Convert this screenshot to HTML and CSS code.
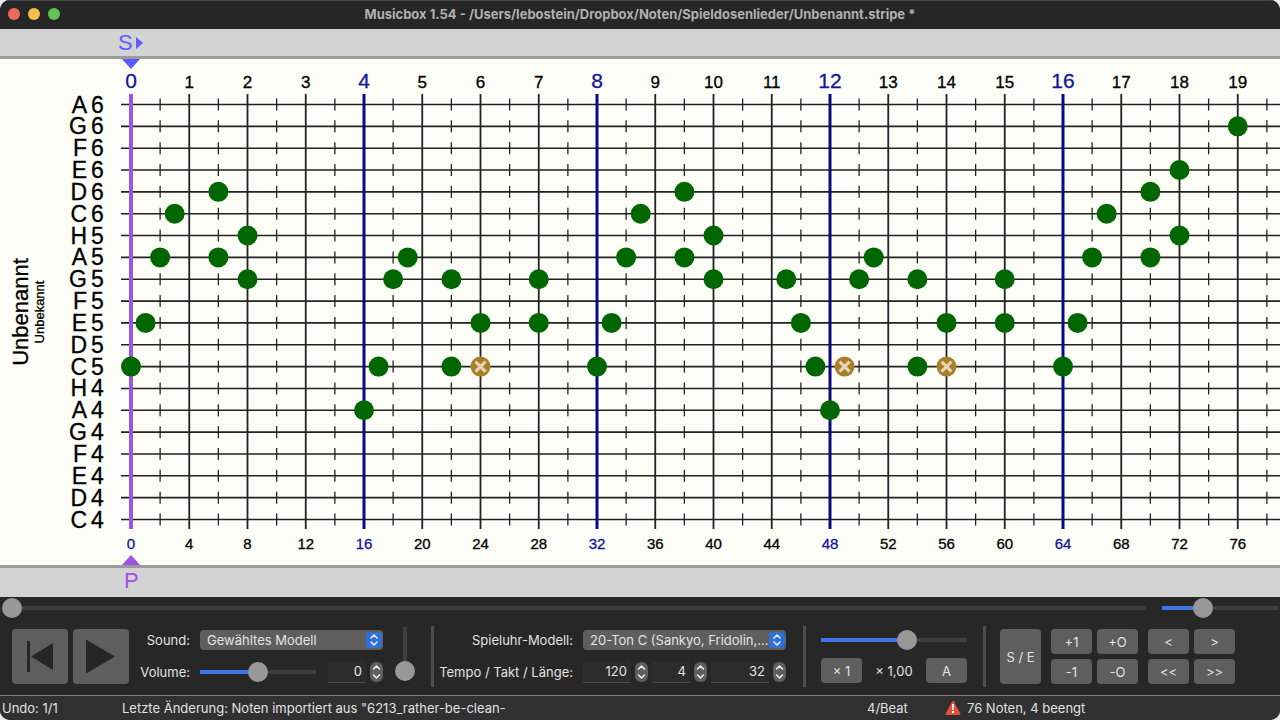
FILE: index.html
```html
<!DOCTYPE html>
<html lang="de">
<head>
    <meta charset="UTF-8">
    <meta name="viewport" content="width=device-width, initial-scale=1.0">
    <title>Musicbox 1.54</title>
    <link rel="stylesheet" href="styles.css">
</head>
<body>
    <div class="window">
        <header class="titlebar">
            <div class="lights">
                <span class="light close"></span>
                <span class="light minimize"></span>
                <span class="light maximize"></span>
            </div>
            <h1>Musicbox 1.54 - /Users/lebostein/Dropbox/Noten/Spieldosenlieder/Unbenannt.stripe *</h1>
        </header>

        <div class="band band-top">
            <span>S</span>
            <svg width="8" height="14" viewBox="0 0 8 14"><path d="M0 1v12l7-6z" fill="#5b5bff"/></svg>
        </div>
        <main class="sheet">
            <svg id="score" height="506"></svg>
        </main>
        <div class="band band-bottom"><span>P</span></div>

        <section class="panel">
            <div class="scrollers">
                <input type="range" class="position" aria-label="Position" value="0">
                <input type="range" class="zoom" aria-label="Zoom" value="32">
            </div>

            <div class="controls">
                <div class="transport">
                    <button class="big" aria-label="Zum Anfang">
                        <svg width="56" height="55" viewBox="0 0 56 55"><path d="M15 12h3v31h-3zM19 27.500L41 14v27z" fill="#262626"/></svg>
                    </button>
                    <button class="big" aria-label="Abspielen">
                        <svg width="56" height="55" viewBox="0 0 56 55"><path d="M13 10.500v34L42 27.500z" fill="#262626"/></svg>
                    </button>
                </div>

                <div class="fields sound">
                    <label for="sound">Sound:</label>
                    <div class="select">
                        <select id="sound"><option>Gewähltes Modell</option></select>
                        <svg width="16" height="16" viewBox="0 0 16 16"><path d="M5 6l3-3 3 3M5 10l3 3 3-3"/></svg>
                    </div>
                    <label for="volume">Volume:</label>
                    <div class="row">
                        <input type="range" id="volume" class="volume" value="50">
                        <input type="text" class="number small" aria-label="Transponieren" value="0">
                        <span class="stepper">
                            <button aria-label="Mehr"><svg width="13" height="10" viewBox="0 0 13 10"><path d="M3.500 7l3-3 3 3"/></svg></button>
                            <button aria-label="Weniger"><svg width="13" height="10" viewBox="0 0 13 10"><path d="M3.500 3l3 3 3-3"/></svg></button>
                        </span>
                    </div>
                </div>
                <input type="range" class="vertical" aria-label="Hall" value="0">

                <div class="divider"></div>

                <div class="fields model">
                    <label for="model">Spieluhr-Modell:</label>
                    <div class="select">
                        <select id="model"><option>20-Ton C (Sankyo, Fridolin,...</option></select>
                        <svg width="16" height="16" viewBox="0 0 16 16"><path d="M5 6l3-3 3 3M5 10l3 3 3-3"/></svg>
                    </div>
                    <label for="tempo">Tempo / Takt / Länge:</label>
                    <div class="row">
                        <input type="text" id="tempo" class="number medium" value="120">
                        <span class="stepper">
                            <button aria-label="Mehr"><svg width="13" height="10" viewBox="0 0 13 10"><path d="M3.500 7l3-3 3 3"/></svg></button>
                            <button aria-label="Weniger"><svg width="13" height="10" viewBox="0 0 13 10"><path d="M3.500 3l3 3 3-3"/></svg></button>
                        </span>
                        <input type="text" class="number small" aria-label="Takt" value="4">
                        <span class="stepper">
                            <button aria-label="Mehr"><svg width="13" height="10" viewBox="0 0 13 10"><path d="M3.500 7l3-3 3 3"/></svg></button>
                            <button aria-label="Weniger"><svg width="13" height="10" viewBox="0 0 13 10"><path d="M3.500 3l3 3 3-3"/></svg></button>
                        </span>
                        <input type="text" class="number large" aria-label="Länge" value="32">
                        <span class="stepper">
                            <button aria-label="Mehr"><svg width="13" height="10" viewBox="0 0 13 10"><path d="M3.500 7l3-3 3 3"/></svg></button>
                            <button aria-label="Weniger"><svg width="13" height="10" viewBox="0 0 13 10"><path d="M3.500 3l3 3 3-3"/></svg></button>
                        </span>
                    </div>
                </div>

                <div class="divider"></div>

                <div class="speed">
                    <input type="range" aria-label="Geschwindigkeit" value="60">
                    <div class="speed-row">
                        <button>× 1</button>
                        <output>× 1,00</output>
                        <button>A</button>
                    </div>
                </div>

                <div class="divider"></div>

                <button class="start-end">S / E</button>
                <div class="pad">
                    <button>+1</button>
                    <button>+O</button>
                    <button>-1</button>
                    <button>-O</button>
                </div>
                <div class="pad">
                    <button>&lt;</button>
                    <button>&gt;</button>
                    <button>&lt;&lt;</button>
                    <button>&gt;&gt;</button>
                </div>
            </div>
        </section>

        <footer class="status">
            <span class="undo">Undo: 1/1</span>
            <span class="change">Letzte Änderung: Noten importiert aus "6213_rather-be-clean-</span>
            <span class="beat">4/Beat</span>
            <span class="count">
                <svg width="16" height="16" viewBox="0 0 16 16"><path d="M8 2L14.500 14H1.500z" fill="#e0503f" stroke="#e0503f" stroke-width="2" stroke-linejoin="round"/><path d="M7 4h2l-.3 6H7.300zM7 11h2v2H7z" fill="#fff"/></svg>
                76 Noten, 4 beengt
            </span>
        </footer>
    </div>
    <script src="script.js"></script>
</body>
</html>
```
FILE: styles.css
```css
* {
    box-sizing: border-box;
}
body {
    margin: 0;
    background: #e8e8e8;
    color: #e2e2e2;
    font-family: Inter, "Liberation Sans", sans-serif;
    font-size: 13px;
    line-height: 20px;
}
.window {
    display: flex;
    flex-direction: column;
    min-height: 100vh;
    border-radius: 10px;
    overflow: hidden;
    background: #272727;
}
button, input, select {
    margin: 0;
    font: inherit;
    color: inherit;
}

/* title bar */
.titlebar {
    display: grid;
    grid-template-columns: 70px 1fr 70px;
    align-items: center;
    height: 29px;
    padding-bottom: 2px;
    background: #262626;
    border-top: 1px solid #4a4a4a;
}
.lights {
    display: flex;
    gap: 8px;
    padding-left: 8px;
}
.light {
    width: 12px;
    height: 12px;
    border-radius: 50%;
}
.close {
    background: #ed6a5e;
}
.minimize {
    background: #f5bf4f;
}
.maximize {
    background: #61c554;
}
h1 {
    margin: 0;
    font-size: 13px;
    font-weight: 700;
    text-align: center;
    white-space: nowrap;
    color: #b0b0b0;
}

/* sheet with the notes */
.band {
    display: flex;
    align-items: center;
    background: #d3d3d3;
    font-family: "Liberation Sans", Arial, sans-serif;
    font-size: 22px;
}
.band-top {
    gap: 3px;
    height: 30px;
    padding-left: 118px;
    border-bottom: 3px solid #9b9b9b;
    color: #5b5bff;
}
.band-bottom {
    height: 32px;
    padding: 0 0 3px 124px;
    border-top: 3px solid #9b9b9b;
    color: #a050e8;
}
.sheet {
    background: #fcfdf7;
}
.sheet svg {
    display: block;
    width: 100%;
    font-family: "Liberation Sans", Arial, sans-serif;
}
.sheet text {
    fill: #000;
    stroke: #000;
    stroke-width: 0.3;
}
.row-line {
    stroke: #222;
    stroke-width: 1.6;
}
.beat-line {
    stroke: #222;
    stroke-width: 1.8;
}
.tick {
    stroke: #222;
    stroke-width: 1.3;
}
.bar-line {
    stroke: #0a0a82;
    stroke-width: 3;
}
.start-line {
    stroke: #9b58dc;
    stroke-width: 4;
}
.pitch {
    font-size: 23px;
}
.beat-number {
    font-size: 17px;
    text-anchor: middle;
}
.bar-number {
    font-size: 21px;
    text-anchor: middle;
}
.step-number {
    font-size: 15px;
    text-anchor: middle;
}
.sheet .bar-number, .sheet .bar {
    fill: #14149a;
    stroke: #14149a;
}
.song-title {
    font-size: 22px;
    text-anchor: middle;
}
.song-author {
    font-size: 13px;
    text-anchor: middle;
}
.note {
    fill: #006600;
}
.note.tight {
    fill: #a97f28;
}
.cross {
    stroke: #e5d6b8;
    stroke-width: 3;
}

/* sliders */
input[type=range] {
    -webkit-appearance: none;
    appearance: none;
    display: block;
    min-width: 0;
    height: 20px;
    background: linear-gradient(#3a7be8, #3a7be8) left center / var(--fill, 0%) 4px no-repeat,
        linear-gradient(#3f3f3f, #3f3f3f) center / 100% 4px no-repeat;
}
input[type=range]::-webkit-slider-thumb {
    -webkit-appearance: none;
    width: 20px;
    height: 20px;
    border-radius: 50%;
    background: #989898;
}
input.vertical {
    writing-mode: vertical-lr;
    direction: rtl;
    width: 20px;
    height: 54px;
    margin: 0 0 6px 12px;
    background: linear-gradient(#3f3f3f, #3f3f3f) center / 4px 100% no-repeat;
}
.scrollers {
    display: flex;
    gap: 16px;
    padding: 1px 2px 8px;
}
.position {
    flex: 1;
}
.zoom {
    width: 116px;
}

/* control panel */
.panel {
    background: #272727;
    flex: 1;
}
.controls {
    display: flex;
    align-items: center;
    height: 61px;
    margin-bottom: 8px;
    padding: 0 12px;
}
.controls button {
    padding: 0;
    border: 0;
    border-radius: 4px;
    background: #5e5e5e;
    text-align: center;
}
.transport {
    display: flex;
    gap: 5px;
}
.big {
    width: 56px;
    height: 55px;
}
.big svg {
    display: block;
}
.fields {
    display: grid;
    grid-template-rows: 22px 22px;
    row-gap: 10px;
    column-gap: 10px;
    align-items: center;
    margin-bottom: 2px;
    text-align: right;
    white-space: nowrap;
}
.sound {
    grid-template-columns: 51px 183px;
    margin-left: 10px;
}
.model {
    grid-template-columns: 134px 203px;
    margin-left: 5px;
}
.select {
    position: relative;
    height: 20px;
}
.select select {
    -webkit-appearance: none;
    appearance: none;
    display: block;
    width: 100%;
    height: 20px;
    padding: 0 16px 0 7px;
    border: 0;
    border-radius: 4px;
    background: #5e5e5e;
}
.select svg {
    position: absolute;
    top: 2px;
    right: 1px;
    border-radius: 4px;
    background: #2f6fd8;
    pointer-events: none;
}
.select path, .stepper path {
    fill: none;
    stroke: #eee;
    stroke-width: 1.6;
    stroke-linecap: round;
    stroke-linejoin: round;
}
.row {
    display: flex;
    align-items: center;
    justify-content: space-between;
}
.volume {
    width: 116px;
    margin-right: 8px;
}
.number {
    height: 22px;
    padding: 0 4px;
    border: 0;
    border-bottom: 1px solid #4a4a4a;
    background: #2c2c2c;
    text-align: right;
}
.small {
    width: 38px;
}
.medium {
    width: 48px;
}
.large {
    width: 58px;
}
.stepper {
    display: flex;
    flex-direction: column;
    width: 13px;
    border-radius: 6px;
    overflow: hidden;
}
.controls .stepper button {
    height: 10px;
    border-radius: 0;
}
.stepper svg {
    display: block;
}
.divider {
    width: 3px;
    height: 61px;
    background: #4d4d4d;
}
.vertical + .divider {
    margin-left: 16px;
}
.model + .divider {
    margin-left: 17px;
}
.speed {
    display: grid;
    row-gap: 8px;
    margin: 0 16px 0 15px;
}
.speed input {
    width: 146px;
}
.speed-row {
    display: flex;
    align-items: center;
    justify-content: space-between;
}
.speed-row button {
    width: 41px;
    height: 25px;
}
.start-end {
    width: 41px;
    height: 55px;
    margin-left: 14px;
}
.pad {
    display: grid;
    grid-template-columns: 41px 41px;
    grid-template-rows: 25px 25px;
    gap: 5px;
    margin-left: 10px;
}

/* status bar */
.status {
    display: grid;
    grid-template-columns: 120px 1fr 78px 335px;
    align-items: center;
    height: 25px;
    padding-left: 2px;
    border-top: 1px solid #808080;
    background: #303030;
    white-space: nowrap;
}
.count {
    display: flex;
    align-items: center;
    gap: 6px;
}
```
FILE: script.js
```js
const BAR_WIDTH = 233;
const STEPS_PER_BAR = 16;
const LEFT = 131;
const TOP = 45.5;
const ROWS_HEIGHT = 415;
const PITCHES = ['A6', 'G6', 'F6', 'E6', 'D6', 'C6', 'H5', 'A5', 'G5', 'F5',
    'E5', 'D5', 'C5', 'H4', 'A4', 'G4', 'F4', 'E4', 'D4', 'C4'];

// step: pitches, an x marks a note that is too close to the one before
const NOTES = {
    0: 'C5', 1: 'E5', 2: 'A5', 3: 'C6', 6: 'D6 A5', 8: 'H5 G5',
    16: 'A4', 17: 'C5', 18: 'G5', 19: 'A5', 22: 'G5 C5', 24: 'E5 C5x', 28: 'G5 E5',
    32: 'C5', 33: 'E5', 34: 'A5', 35: 'C6', 38: 'D6 A5', 40: 'H5 G5',
    45: 'G5', 46: 'E5', 47: 'C5', 48: 'A4', 49: 'C5x', 50: 'G5', 51: 'A5',
    54: 'G5 C5', 56: 'E5 C5x', 60: 'G5 E5',
    64: 'C5', 65: 'E5', 66: 'A5', 67: 'C6', 70: 'D6 A5', 72: 'E6 H5', 76: 'G6'
};

const score = document.getElementById('score');

const stepX = step => LEFT + step * BAR_WIDTH / STEPS_PER_BAR;
const rowY = row => TOP + row * ROWS_HEIGHT / (PITCHES.length - 1);
const line = (cls, x1, y1, x2, y2) => `<line class="${cls}" x1="${x1}" y1="${y1}" x2="${x2}" y2="${y2}"/>`;
const text = (cls, x, y, s, extra = '') => `<text class="${cls}" x="${x}" y="${y}" ${extra}>${s}</text>`;

function drawScore() {
    const width = score.clientWidth;
    let out = '';

    PITCHES.forEach((pitch, row) => {
        const y = rowY(row);
        out += line('row-line', 121, y, width, y);
        out += text('pitch', 87, y + 8, pitch[0], 'text-anchor="end"');
        out += text('pitch', 91, y + 8, pitch[1]);
    });

    for (let step = 0; stepX(step) < width; step += 2) {
        const x = stepX(step);
        if (step % 4) {
            PITCHES.forEach((pitch, row) => {
                out += line('tick', x, rowY(row) - 6, x, rowY(row) + 6);
            });
            continue;
        }
        const isBar = step % STEPS_PER_BAR === 0;
        out += line(step === 0 ? 'start-line' : isBar ? 'bar-line' : 'beat-line', x, 35, x, 470);
        out += text(isBar ? 'bar-number' : 'beat-number', x, 29, step / 4);
        out += text(isBar ? 'step-number bar' : 'step-number', x, 490, step);
    }

    for (const step in NOTES) {
        NOTES[step].split(' ').forEach(name => {
            const x = stepX(step);
            const y = rowY(PITCHES.indexOf(name.slice(0, 2)));
            const tight = name.endsWith('x');
            out += `<circle class="note${tight ? ' tight' : ''}" cx="${x}" cy="${y}" r="10"/>`;
            if (tight) {
                out += line('cross', x - 5, y - 5, x + 5, y + 5);
                out += line('cross', x - 5, y + 5, x + 5, y - 5);
            }
        });
    }

    out += text('song-title', 0, 0, 'Unbenannt', 'transform="translate(28 253) rotate(-90)"');
    out += text('song-author', 0, 0, 'Unbekannt', 'transform="translate(44 253) rotate(-90)"');

    // start and play position markers
    out += '<path d="M122 0h18l-9 10z" fill="#5b5bff"/>';
    out += '<path d="M122 506h18l-9-10z" fill="#a050e8"/>';

    score.innerHTML = out;
}

function fillSlider(slider) {
    slider.style.setProperty('--fill', slider.value + '%');
}

document.querySelectorAll('input[type=range]').forEach(slider => {
    fillSlider(slider);
    slider.addEventListener('input', () => fillSlider(slider));
});

window.addEventListener('resize', drawScore);
drawScore();
```
